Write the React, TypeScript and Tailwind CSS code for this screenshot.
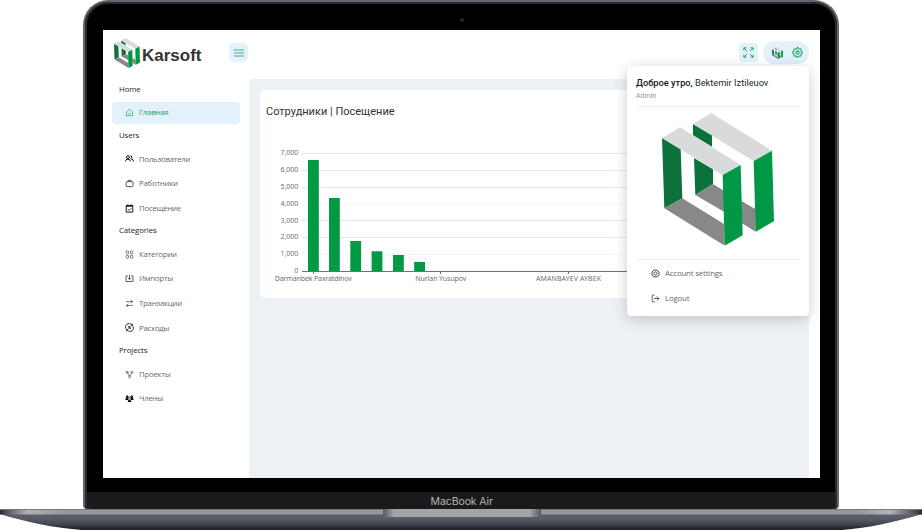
import type { ComponentType, ReactNode } from "react";
import { LuArrowRightLeft, LuLogOut } from "react-icons/lu";
import { TbSettings } from "react-icons/tb";

type Icon = ComponentType<{ className?: string }>;

function Logo({ className }: { className: string }) {
  return (
    <svg viewBox="126 37 336 398" preserveAspectRatio="none" className={className}>
      <path fill="#0d713c" d="M219 70 276 104V138L219 104ZM222 172 279 206V250L226 283Z" />
      <path fill="#888" d="M226 283 279 250 312 270V333ZM364 301 407 326V393L366 368Z" />
      <path fill="#d9dbda" d="M274 37 456 150 401 181 219 70Z" />
      <path fill="#009846" d="M401 181 456 150 462 362 407 393Z" />
      <path fill="#0d713c" d="M126 112 182 146 187 293 133 323Z" />
      <path fill="#888" d="M133 323 187 293 312 370 314 435Z" />
      <path fill="#d9dbda" d="M180 80 362 193 308 223 126 112Z" />
      <path fill="#009846" d="M308 223 362 193 368 404 314 435Z" />
    </svg>
  );
}

function Home({ className }: { className?: string }) {
  return (
    <svg viewBox="0 0 9 9" fill="none" stroke="currentColor" strokeWidth=".75" strokeLinejoin="round" className={className}>
      <path d="M1.4 4.2 4.5 1.4 7.6 4.2V7.6H1.4Z" />
      <path d="M3.2 5.2Q4.5 6.8 5.8 5.2" />
    </svg>
  );
}

function People({ className }: { className?: string }) {
  return (
    <svg viewBox="0 0 9 9" fill="none" stroke="currentColor" strokeWidth="1" className={className}>
      <circle cx="2.9" cy="3.2" r="1.4" />
      <path d="M.7 7.4V6.6Q.7 5.2 2.9 5.2T5 6.6V7.4M5.3 1.8A1.4 1.4 0 1 1 5.6 4.6M6.3 5.1Q8.4 5.3 8.4 6.8V7.4" />
    </svg>
  );
}

function Briefcase({ className }: { className?: string }) {
  return (
    <svg viewBox="0 0 9 9" fill="none" stroke="currentColor" strokeWidth=".9" className={className}>
      <rect x="1.2" y="2.7" width="6.8" height="4.9" rx=".8" />
      <path d="M3 2.6V1.4H6.2V2.6" />
    </svg>
  );
}

function CalendarCheck({ className }: { className?: string }) {
  return (
    <svg viewBox="0 0 9 9" fill="none" stroke="currentColor" className={className}>
      <path d="M1.2 1.6H7.8V8.1H1.2Z" strokeWidth=".9" />
      <path d="M1.2 2.2H7.8M2.8 .4V2M6.2 .4V2" strokeWidth=".9" />
      <path d="M2.9 5.2 4.1 6.4 6.3 4.2" strokeWidth=".8" />
    </svg>
  );
}

function Grid({ className }: { className?: string }) {
  return (
    <svg viewBox="0 0 9 9" fill="none" stroke="currentColor" strokeWidth=".7" className={className}>
      <rect x="1.2" y=".9" width="2.4" height="2.9" rx=".7" />
      <rect x="5.4" y=".9" width="2.4" height="2.9" rx=".7" />
      <rect x="1.2" y="5.3" width="2.4" height="2.9" rx=".7" />
      <rect x="5.4" y="5.3" width="2.4" height="2.9" rx=".7" />
    </svg>
  );
}

function ImportBox({ className }: { className?: string }) {
  return (
    <svg viewBox="0 0 9 9" fill="none" stroke="currentColor" strokeWidth=".85" className={className}>
      <path d="M3 2H1V7.5H8V2H6M4.5 1V5.4M3 4.1 4.5 5.6 6 4.1" />
    </svg>
  );
}

function MoneyCycle({ className }: { className?: string }) {
  return (
    <svg viewBox="0 0 9 9" fill="none" stroke="currentColor" strokeWidth=".8" className={className}>
      <path d="M1 5.8A3.6 3.6 0 0 1 6.8 1.6M8 3.2A3.6 3.6 0 0 1 2.2 7.4M7.6 .8V2.4H6M1.4 8.2V6.6H3" />
      <path d="M5.7 3.3H4Q3.3 3.3 3.3 3.9T4 4.5H5Q5.7 4.5 5.7 5.1T5 5.7H3.3" strokeWidth=".7" />
    </svg>
  );
}

function Nodes({ className }: { className?: string }) {
  return (
    <svg viewBox="0 0 9 9" fill="none" stroke="currentColor" strokeWidth=".7" className={className}>
      <circle cx="1.9" cy="2.2" r=".9" />
      <circle cx="7.1" cy="2.2" r=".9" />
      <circle cx="4.6" cy="6.8" r=".9" />
      <path d="M2.8 2.4H4.3M2.4 3 4.1 6M6.6 3 5 6" />
    </svg>
  );
}

function Members({ className }: { className?: string }) {
  return (
    <svg viewBox="0 0 9 9" fill="currentColor" className={className}>
      <circle cx="2.2" cy="2.7" r="1.3" />
      <circle cx="6.8" cy="2.7" r="1.3" />
      <circle cx="4.5" cy="4.4" r="1.15" fill="none" stroke="currentColor" strokeWidth=".7" />
      <path d="M.5 6V5Q.5 4.1 1.6 4.1H2.8L3.2 6ZM8.5 6V5Q8.5 4.1 7.4 4.1H6.2L5.8 6ZM2.8 8V7Q2.8 6 4.5 6T6.2 7V8Z" />
    </svg>
  );
}

function Octagon({ className }: { className?: string }) {
  return (
    <svg viewBox="0 0 9 9" fill="none" stroke="currentColor" strokeWidth=".85" className={className}>
      <path d="M3 1.1H6L8 3V6L6 7.9H3L1 6V3Z" />
      <circle cx="4.5" cy="4.5" r="1.6" />
    </svg>
  );
}

function Expand({ className }: { className?: string }) {
  return (
    <svg viewBox="0 0 13 13" fill="none" stroke="currentColor" strokeWidth="1.1" className={className}>
      <path d="M1 4V1H4M1 1 4.6 4.6M9 1H12V4M12 1 8.4 4.6M1 9V12H4M1 12 4.6 8.4M12 9V12H9M12 12 8.4 8.4" />
    </svg>
  );
}

function Heading({ children }: { children: ReactNode }) {
  return (
    <div className="flex h-[19.5px] items-center pl-[7px] text-[7.8px] tracking-[-0.1px] text-[#1b242e]">{children}</div>
  );
}

function Item({ icon: I, label, active, dark }: { icon: Icon; label: string; active?: boolean; dark?: boolean }) {
  return (
    <div
      className={`flex h-[22.6px] shrink-0 items-center gap-[5px] rounded-[4px] pl-[13px] text-[7.8px] tracking-[-0.24px] ${
        active ? "bg-[#e3f1fc] font-medium text-[#2ba163]" : "text-[#646b73]"
      }`}
    >
      <I className={`size-[9px] ${active ? "" : dark ? "text-black" : "text-[#42474d]"}`} />
      <span className="pt-[1px]">{label}</span>
    </div>
  );
}

function Sidebar() {
  return (
    <nav className="flex w-[146px] shrink-0 flex-col gap-[2px] pt-[1px] pr-[9.5px] pl-[9px]">
      <Heading>Home</Heading>
      <Item icon={Home} label="Главная" active />
      <Heading>Users</Heading>
      <Item icon={People} label="Пользователи" dark />
      <Item icon={Briefcase} label="Работники" />
      <Item icon={CalendarCheck} label="Посещение" dark />
      <Heading>Categories</Heading>
      <Item icon={Grid} label="Категории" />
      <Item icon={ImportBox} label="Импорты" />
      <Item icon={LuArrowRightLeft} label="Транзакции" />
      <Item icon={MoneyCycle} label="Расходы" dark />
      <Heading>Projects</Heading>
      <Item icon={Nodes} label="Проекты" />
      <Item icon={Members} label="Члены" dark />
    </nav>
  );
}

const bars = [
  [308, 160],
  [329, 198],
  [350.3, 241],
  [371.6, 251.3],
  [393, 255],
  [414.2, 262],
];
const ticks = ["7,000", "6,000", "5,000", "4,000", "3,000", "2,000", "1,000", "0"];

function Chart() {
  return (
    <svg viewBox="260 130 549 168" className="h-[168px] w-[549px] font-['Noto_Sans',sans-serif]" fontSize="7" fill="#6e7079">
      {ticks.map((t, i) => (
        <g key={t}>
          <text x="298.3" y={155.2 + i * 16.83} textAnchor="end">
            {t}
          </text>
          {i < 7 && <path d={`M302 ${Math.round(153 + i * 16.83) + 0.5}H809`} stroke={i === 3 || i === 6 ? "#f1f4f9" : "#e2e5f0"} />}
        </g>
      ))}
      {bars.map(([x, y]) => (
        <rect key={x} x={x} y={y} width="10.8" height={271 - y} fill="#009a44" />
      ))}
      <path d="M302 271.5H809M313.5 271V274M440.5 271V274M568.5 271V274" stroke="#6e7079" fill="none" />
      <text x="313.3" y="281" textAnchor="middle" textLength="77">Darmanbek Paxratdinov</text>
      <text x="440.8" y="281" textAnchor="middle" textLength="51">Nurlan Yusupov</text>
      <text x="568.5" y="281" textAnchor="middle" textLength="65">AMANBAYEV AYBEK</text>
    </svg>
  );
}

function ProfileMenu() {
  return (
    <div className="absolute top-[36px] left-[524px] flex h-[250px] w-[181.5px] flex-col rounded-[4px] bg-white px-[9px] shadow-[0_3px_14px_rgba(0,0,0,0.2)]">
      <div className="mt-[11px] h-[12px] font-['Roboto',sans-serif] text-[9.25px] leading-[12px] whitespace-nowrap text-[#212b36]">
        <span className="font-medium text-[#111827]">Доброе утро,</span> Bektemir Iztileuov
      </div>
      <div className="h-[17px] pt-[2.5px] font-['Roboto',sans-serif] text-[7px] leading-[9px] text-[#8c95a3]">Admin</div>
      <div className="flex h-[154px] shrink-0 justify-center border-y border-[#f0f1f3] pt-[5.5px]">
        <Logo className="h-[132.7px] w-[112px]" />
      </div>
      <div className="flex h-[25px] items-center gap-[5px] pt-[2px] pl-[15px] text-[7.8px] tracking-[-0.15px] text-[#5f6670]">
        <Octagon className="size-[9px] text-[#333]" />
        Account settings
      </div>
      <div className="flex h-[25px] items-center gap-[5px] pt-[2px] pl-[15px] text-[7.8px] tracking-[-0.15px] text-[#5f6670]">
        <LuLogOut className="size-[9px] text-[#333]" />
        Logout
      </div>
    </div>
  );
}

function Dashboard() {
  return (
    <div className="relative flex h-[448px] w-[717px] flex-col overflow-hidden bg-white font-['Open_Sans',sans-serif]">
      <header className="flex h-[49px] shrink-0 items-start pl-[10.5px]">
        <Logo className="mt-[7.5px] h-[30px] w-[26px]" />
        <div className="ml-[2.5px] w-[87px] pt-[16px] font-['Liberation_Sans',sans-serif] text-[17px] leading-[20px] font-bold text-[#333]">Karsoft</div>
        <div className="mt-[13px] flex size-[19px] items-center justify-center rounded-[5px] bg-[#e3f1fc]">
          <svg viewBox="0 0 10 8" className="h-[8px] w-[10px]" stroke="#2bae70">
            <path d="M0 1H10M0 4H10M0 7H10" strokeWidth=".9" />
          </svg>
        </div>
        <div className="ml-auto flex items-center gap-[5px] pt-[11px] pr-[11.5px]">
          <div className="flex size-[19px] items-center justify-center rounded-[4px] bg-[#e3f1fc] text-[#16a660]">
            <Expand className="size-[11px]" />
          </div>
          <div className="flex h-[23px] w-[46px] items-center gap-[8px] rounded-full bg-[#e3f1fc] pl-[9px] text-[#16a660]">
            <Logo className="h-[12px] w-[11px]" />
            <TbSettings className="size-[13px]" />
          </div>
        </div>
      </header>
      <div className="flex min-h-0 flex-1">
        <Sidebar />
        <main className="w-[560px] overflow-hidden rounded-tl-[5px] bg-[#edf1f6] pt-[11px] pl-[11px]">
          <section className="h-[208px] w-[560px] rounded-[5px] bg-white">
            <h1 className="h-[40px] pt-[14.5px] pl-[6px] font-['Roboto',sans-serif] text-[11px] leading-[14px] text-[#333]">Сотрудники | Посещение</h1>
            <Chart />
          </section>
        </main>
      </div>
      <ProfileMenu />
    </div>
  );
}

function LaptopBase() {
  return (
    <svg viewBox="0 0 922 21" className="block h-[21px] w-[922px]">
      <defs>
        <linearGradient id="under" x2="0" y2="1">
          <stop offset=".25" stopColor="#5c5e67" />
          <stop offset=".65" stopColor="#41434e" />
          <stop offset="1" stopColor="#1a1a29" />
        </linearGradient>
        <linearGradient id="deck">
          <stop offset="0" stopColor="#252733" />
          <stop offset=".008" stopColor="#555963" />
          <stop offset=".03" stopColor="#b1b2b6" />
          <stop offset=".07" stopColor="#96979d" />
          <stop offset=".93" stopColor="#96979d" />
          <stop offset=".965" stopColor="#b4b5b9" />
          <stop offset=".99" stopColor="#555963" />
          <stop offset="1" stopColor="#252733" />
        </linearGradient>
        <linearGradient id="notch">
          <stop offset="0" stopColor="#555762" />
          <stop offset=".07" stopColor="#a3a4a9" />
          <stop offset=".93" stopColor="#a3a4a9" />
          <stop offset="1" stopColor="#555762" />
        </linearGradient>
      </defs>
      <path fill="url(#under)" d="M0 5H922C896 13 868 19 842 21H82C55 19 25 13 0 5Z" />
      <path fill="url(#deck)" d="M0 0H922V5.5H0Z" />
      <path fill="#777981" d="M0 0H922V1H0Z" />
      <path fill="url(#notch)" d="M383 0H541V4Q541 8 537 8H387Q383 8 383 4Z" />
    </svg>
  );
}

export default function App() {
  return (
    <div className="flex h-[530px] w-[922px] flex-col overflow-hidden bg-white">
      <div className="ml-[83px] flex h-[509px] w-[755.5px] shrink-0 flex-col overflow-hidden rounded-t-[25px] rounded-b-[4px] border-x-2 border-t-2 border-[#62656d] bg-black shadow-[inset_0_0_0_2px_#292a2d]">
        <div className="flex h-[28px] shrink-0 items-center justify-center">
          <div className="mt-[7px] ml-[2px] size-[4px] rounded-full bg-[#25262b]" />
        </div>
        <div className="pl-[18px]">
          <Dashboard />
        </div>
        <div className="mx-[2px] mt-[14px] flex h-[17px] items-center justify-center rounded-b-[5px] bg-[#1a1a1a] pt-[2px] pl-[2px] font-['Inter',sans-serif] text-[10.5px] tracking-[-0.1px] text-[#b5b5b8]">
          MacBook Air
        </div>
      </div>
      <LaptopBase />
    </div>
  );
}
